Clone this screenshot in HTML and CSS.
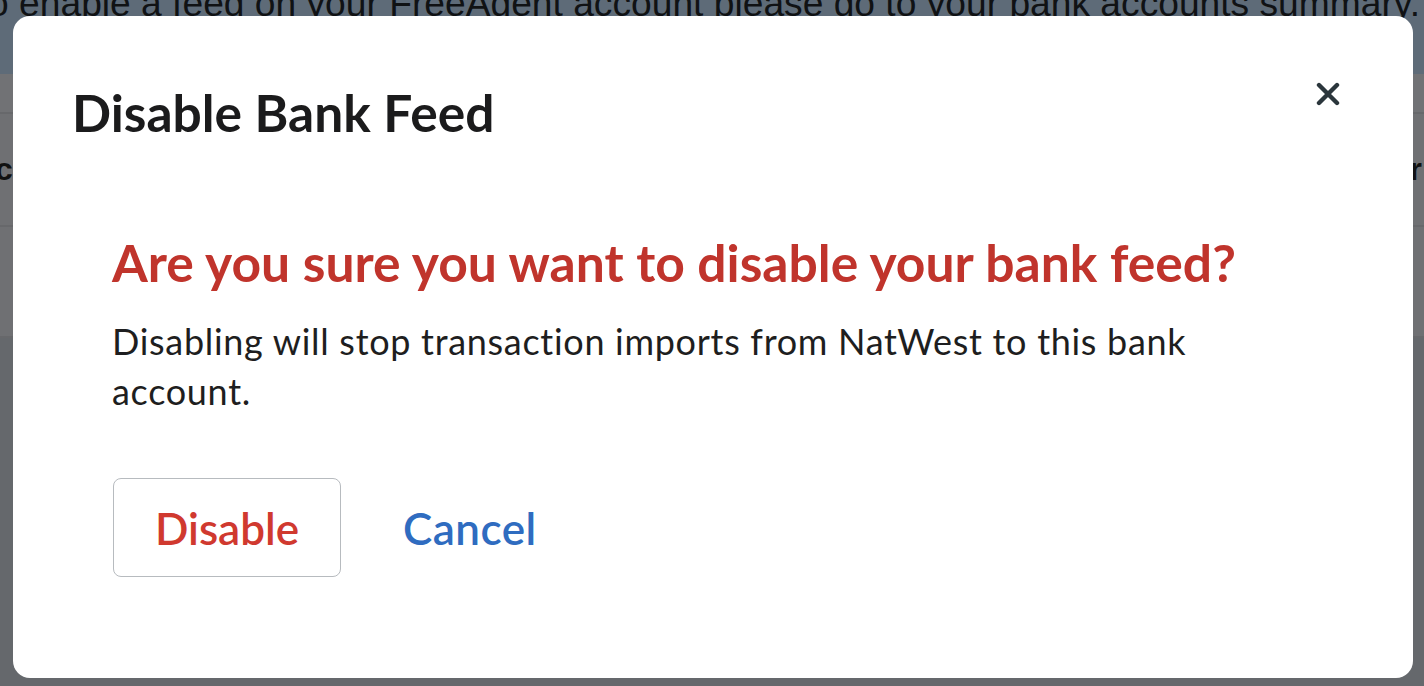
FILE: index.html
```html
<!DOCTYPE html>
<html lang="en">
<head>
<meta charset="utf-8">
<title>Disable Bank Feed</title>
<link rel="stylesheet" href="styles.css">
</head>
<body>
<div class="page">
  <div class="notice"><p class="notice-text">To enable a feed on your FreeAgent account please go to your bank accounts summary.</p></div>
  <div class="row row-thin"></div>
  <div class="row row-head"><span class="cell-left">c</span><span class="cell-right">r</span></div>
  <div class="row row-body"></div>
  <div class="rest"></div>
</div>

<div class="overlay">
  <div class="modal" role="dialog" aria-labelledby="modal-title">
    <div class="modal-header">
      <h1 class="modal-title" id="modal-title">Disable Bank Feed</h1>
      <button class="close" aria-label="Close">
        <svg width="24" height="24" viewBox="0 0 24 24"><path d="M3 3L21 21M21 3L3 21" stroke="#2b363c" stroke-width="4.4" stroke-linecap="round" fill="none"/></svg>
      </button>
    </div>
    <div class="modal-body">
      <h2 class="warning">Are you sure you want to disable your bank feed?</h2>
      <p class="message">Disabling will stop transaction imports from NatWest to this bank account.</p>
      <div class="actions">
        <button class="btn-disable">Disable</button>
        <button class="btn-cancel">Cancel</button>
      </div>
    </div>
  </div>
</div>
</body>
</html>
```

FILE: styles.css
```css
html, body {
  margin: 0;
  padding: 0;
  height: 100%;
  overflow: hidden;
}
body {
  font-family: "Lato", "Liberation Sans", sans-serif;
  background: #65686c;
}
.page {
  display: flex;
  flex-direction: column;
  height: 100%;
}
.notice {
  height: 74px;
  background: #5e6b78;
  display: flex;
  justify-content: flex-end;
  padding-right: 4px;
  overflow: hidden;
}
.notice-text {
  margin: -22px 0 0;
  font-family: "Liberation Sans", sans-serif;
  font-size: 37.2px;
  line-height: 50px;
  color: #101214;
  white-space: nowrap;
  flex-shrink: 0;
}
.row {
  background: #6f7073;
  border-bottom: 2px solid #67686b;
}
.row-thin {
  height: 38px;
  background: #717275;
}
.row-head {
  height: 111px;
  display: flex;
  justify-content: space-between;
  align-items: center;
  font-family: "Liberation Sans", sans-serif;
  font-weight: 700;
  font-size: 32px;
  color: #111;
}
.cell-left { margin-left: -5px; }
.cell-right { margin-right: 2px; }
.row-body {
  height: 109px;
}
.rest {
  flex: 1;
  background: #65686c;
}

.overlay {
  position: fixed;
  inset: 0;
  padding: 16px 11px 8px 13px;
  display: flex;
}
.modal {
  flex: 1;
  background: #ffffff;
  border-radius: 17px;
  padding: 66px 73px 101px 59px;
  display: flex;
  flex-direction: column;
}
.modal-header {
  display: flex;
  justify-content: space-between;
  align-items: flex-start;
}
.modal-title {
  margin: 0;
  font-size: 51.5px;
  line-height: 60px;
  font-weight: 700;
  color: #1b1b1c;
}
.close {
  border: 0;
  background: none;
  padding: 0;
  width: 24px;
  height: 24px;
  display: block;
}
.close svg { display: block; }
.modal-body {
  margin: 90px 0 0 40px;
}
.warning {
  margin: 0;
  font-size: 51.6px;
  line-height: 60px;
  font-weight: 700;
  color: #c0342c;
}
.message {
  margin: 24px 0 0;
  font-size: 36px;
  letter-spacing: 0.7px;
  line-height: 50px;
  color: #1e1e20;
  max-width: 1110px;
}
.actions {
  margin-top: 62px;
  display: flex;
  align-items: center;
  gap: 62px;
}
.btn-disable {
  height: 99px;
  width: 228px;
  border: 1.5px solid #b7bbbf;
  border-radius: 8px;
  background: #fff;
  font-family: inherit;
  font-size: 44px;
  font-weight: 600;
  color: #d0392f;
  padding: 0;
  margin-left: 1px;
}
.btn-cancel {
  border: 0;
  background: none;
  padding: 0;
  font-family: inherit;
  font-size: 44px;
  letter-spacing: 0.5px;
  font-weight: 600;
  color: #2f6cc0;
}
```
